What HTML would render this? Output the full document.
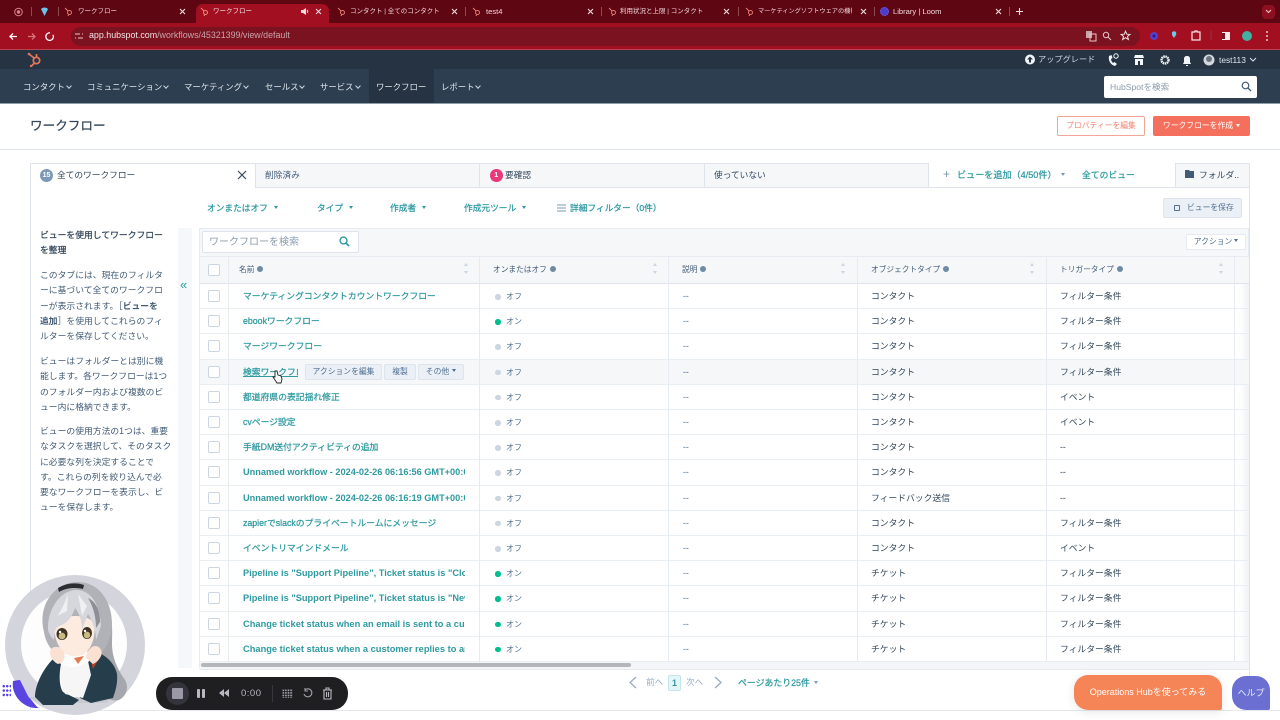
<!DOCTYPE html>
<html lang="ja"><head><meta charset="utf-8"><title>ワークフロー</title>
<style>
*{box-sizing:border-box}
html,body{margin:0;padding:0;width:1280px;height:720px;overflow:hidden;background:#fff}
body{font-family:"Liberation Sans","Noto Sans CJK JP",sans-serif;position:relative;color:#33475b;filter:blur(.3px)}
.a{position:absolute;white-space:nowrap}
.tab{position:absolute;top:5px;line-height:13px;font-size:6.500px;color:#f0d8da;white-space:nowrap}
.x{position:absolute;top:7px}
.hub{position:absolute;top:7px}
.sep{position:absolute;top:7px;width:1px;height:9px;background:#8d4a52}
.nav{position:absolute;top:81px;font-size:8.400px;line-height:13px;color:#dfe6ec;white-space:nowrap}
.car{position:absolute;top:3px;width:4px;height:4px;border-right:1px solid #cbd6e2;border-bottom:1px solid #cbd6e2;transform:rotate(45deg)}
.side{position:absolute;left:40px;font-size:8.800px;line-height:15.300px;color:#425b76;white-space:nowrap}
.m{-webkit-text-stroke:.25px currentColor}
.filter{position:absolute;top:201px;font-size:8.700px;line-height:14px;color:#2f9aa0;white-space:nowrap;-webkit-text-stroke:.25px currentColor}
.tri{display:inline-block;width:0;height:0;border:2.500px solid transparent;border-top:3px solid currentColor;border-bottom:0;margin:0 0 2px 6px;vertical-align:middle;-webkit-text-stroke:0}
.th{position:absolute;top:264px;font-size:7.700px;line-height:12px;color:#425b76;white-space:nowrap}
.i{display:inline-block;width:6px;height:6px;border-radius:50%;background:#6f8aa3;margin-left:3px}
.sort{position:absolute;top:264px;width:5px;height:12px}
.sort:before,.sort:after{content:"";position:absolute;left:0;border:2.500px solid transparent}
.sort:before{top:-1px;border-bottom:3px solid #cbd6e2;border-top:0}
.sort:after{top:7px;border-top:3px solid #cbd6e2;border-bottom:0}
.vl{position:absolute;top:256px;width:1px;height:406px;background:#e5ebf1}
.r{position:absolute;left:199px;width:1050px;height:25.200px;border-bottom:1px solid #e9eef3;font-size:8.800px;line-height:25px;color:#33475b}
.r>*{position:absolute;top:0;white-space:nowrap}
.cb{left:9px;top:6px!important;width:12px;height:12px;border:1px solid #cbd6e2;border-radius:2px;background:#fff}
.n{left:44px;width:222px;overflow:hidden;font-size:8.800px;color:#2f9aa0;-webkit-text-stroke:.25px currentColor}
.l{font-size:9.200px;font-weight:700;-webkit-text-stroke:0}
.s{left:296px;font-size:8px;color:#516f90;padding-left:11px}
.s:before{content:"";position:absolute;left:0;top:10px;width:5.500px;height:5.500px;border-radius:50%;background:#cbd6e2}
.on:before{background:#00bd8f}
.d{left:484px;color:#516f90}
.o{left:672px}
.t{left:861px}
.btn{background:#eaf0f6;border:1px solid #dfe3eb;border-radius:2px;font-size:7.800px;color:#506e91;height:16px;line-height:14px;text-align:center;top:4px!important}
</style></head><body>

<!-- browser chrome -->
<div class="a" style="left:0;top:0;width:1280px;height:23px;background:#5f0613"></div>
<div class="a" style="left:0;top:23px;width:1280px;height:27px;background:#a10f21"></div>
<div class="a" style="left:0;top:49px;width:1280px;height:1px;background:#b8444f"></div>
<div class="a" style="left:196px;top:4px;width:133px;height:19px;background:#a10f21;border-radius:7px 7px 0 0"></div>
<div class="a" style="left:71px;top:27px;width:1069px;height:19px;background:#7a1220;border-radius:10px"></div>

<svg class="a" style="left:13px;top:7px" width="11" height="10" viewBox="0 0 11 10"><circle cx="5.500" cy="5" r="3.800" fill="none" stroke="#d9828c"/><circle cx="5.500" cy="5" r="1.700" fill="#d9828c"/></svg>
<div class="sep" style="left:31px"></div>
<svg class="a" style="left:40px;top:7px" width="9" height="10" viewBox="0 0 9 10"><path d="M1 2c2-2 5-2 7 0L4.500 9z" fill="#6cc4ea"/></svg>
<div class="sep" style="left:58px"></div>

<svg class="hub" style="left:64px" width="9" height="10" viewBox="0 0 9 10"><path d="M1 1l3 3M4 9l1-2" stroke="#e27a70" fill="none"/><circle cx="5.500" cy="5.500" r="2" fill="none" stroke="#e27a70"/></svg>
<div class="tab" style="left:78px">ワークフロー</div>
<svg class="x" style="left:179px" width="7" height="9" viewBox="0 0 7 9"><path d="M1 2l5 5M6 2l-5 5" stroke="#f0dcdd" stroke-width="1.100"/></svg>
<svg class="hub" style="left:200px" width="9" height="10" viewBox="0 0 9 10"><path d="M1 1l3 3M4 9l1-2" stroke="#f08a78" fill="none"/><circle cx="5.500" cy="5.500" r="2" fill="none" stroke="#f08a78"/></svg>
<div class="tab" style="left:213px;color:#f6e6e8">ワークフロー</div>
<svg class="x" style="left:301px" width="8" height="9" viewBox="0 0 8 9"><path d="M0 3h2l3-2v7L2 6H0z" fill="#f0dcdd"/><path d="M6 3c1 1 1 2 0 3" stroke="#f0dcdd" fill="none"/></svg>
<svg class="x" style="left:315px" width="7" height="9" viewBox="0 0 7 9"><path d="M1 2l5 5M6 2l-5 5" stroke="#f0dcdd" stroke-width="1.100"/></svg>
<svg class="hub" style="left:337px" width="9" height="10" viewBox="0 0 9 10"><path d="M1 1l3 3M4 9l1-2" stroke="#e27a70" fill="none"/><circle cx="5.500" cy="5.500" r="2" fill="none" stroke="#e27a70"/></svg>
<div class="tab" style="left:350px">コンタクト | 全てのコンタクト</div>
<svg class="x" style="left:451px" width="7" height="9" viewBox="0 0 7 9"><path d="M1 2l5 5M6 2l-5 5" stroke="#f0dcdd" stroke-width="1.100"/></svg>
<div class="sep" style="left:465px"></div>
<svg class="hub" style="left:472px" width="9" height="10" viewBox="0 0 9 10"><path d="M1 1l3 3M4 9l1-2" stroke="#e27a70" fill="none"/><circle cx="5.500" cy="5.500" r="2" fill="none" stroke="#e27a70"/></svg>
<div class="tab" style="left:486px;font-size:7.600px">test4</div>
<svg class="x" style="left:587px" width="7" height="9" viewBox="0 0 7 9"><path d="M1 2l5 5M6 2l-5 5" stroke="#f0dcdd" stroke-width="1.100"/></svg>
<div class="sep" style="left:601px"></div>
<svg class="hub" style="left:608px" width="9" height="10" viewBox="0 0 9 10"><path d="M1 1l3 3M4 9l1-2" stroke="#e27a70" fill="none"/><circle cx="5.500" cy="5.500" r="2" fill="none" stroke="#e27a70"/></svg>
<div class="tab" style="left:620px">利用状況と上限 | コンタクト</div>
<svg class="x" style="left:723px" width="7" height="9" viewBox="0 0 7 9"><path d="M1 2l5 5M6 2l-5 5" stroke="#f0dcdd" stroke-width="1.100"/></svg>
<div class="sep" style="left:738px"></div>
<svg class="hub" style="left:745px" width="9" height="10" viewBox="0 0 9 10"><path d="M1 1l3 3M4 9l1-2" stroke="#e27a70" fill="none"/><circle cx="5.500" cy="5.500" r="2" fill="none" stroke="#e27a70"/></svg>
<div class="tab" style="left:758px;width:94px;overflow:hidden;font-size:6.200px">マーケティングソフトウェアの機能</div>
<svg class="x" style="left:860px" width="7" height="9" viewBox="0 0 7 9"><path d="M1 2l5 5M6 2l-5 5" stroke="#f0dcdd" stroke-width="1.100"/></svg>
<div class="sep" style="left:874px"></div>
<div class="a" style="left:880px;top:7px;width:9px;height:9px;border-radius:50%;border:1.500px dotted #7a5fe0;background:#4b3cc9"></div>
<div class="tab" style="left:893px;font-size:7.600px">Library | Loom</div>
<svg class="x" style="left:995px" width="7" height="9" viewBox="0 0 7 9"><path d="M1 2l5 5M6 2l-5 5" stroke="#f0dcdd" stroke-width="1.100"/></svg>
<div class="sep" style="left:1009px"></div>
<svg class="a" style="left:1015px;top:7px" width="9" height="9" viewBox="0 0 9 9"><path d="M4.500 1v7M1 4.500h7" stroke="#f5dfe1" stroke-width="1.100"/></svg>
<div class="a" style="left:1262px;top:5px;width:13px;height:14px;border-radius:4px;background:#8e0f20"></div>
<svg class="a" style="left:1265px;top:9px" width="7" height="5" viewBox="0 0 7 5"><path d="M1 1l2.500 2.500L6 1" fill="none" stroke="#f3c9cd"/></svg>

<svg class="a" style="left:6px;top:29px" width="50" height="15" viewBox="0 0 50 15"><g fill="none" stroke-width="1.300"><path d="M4 7.500h7M7 4.500 4 7.500l3 3" stroke="#fff"/><path d="M22 7.500h7M26 4.500l3 3-3 3" stroke="#d9737e"/><path d="M44 3.800a3.800 3.800 0 1 0 3 2" stroke="#fff"/></g></svg>
<svg class="a" style="left:75px;top:32px" width="8" height="9" viewBox="0 0 8 9"><path d="M0 2h5M7 2h1M0 6h1M3 6h5" stroke="#f0c6ca"/></svg>
<div class="a" style="left:89px;top:29px;font-size:8.900px;line-height:13px;color:#c9a4a9"><span style="color:#f3e2e3">app.hubspot.com</span>/workflows/45321399/view/default</div>

<svg class="a" style="left:1083px;top:28px" width="198" height="16" viewBox="0 0 198 16"><g fill="none" stroke="#e8c6ca" stroke-width="1"><rect x="3" y="3" width="6" height="7" fill="#c9a4a9" stroke="none"/><rect x="7" y="6" width="6" height="7"/><circle cx="23" cy="7" r="2.700"/><path d="M25 9l3 3"/><path d="M42.500 3.200l1.300 3 3.200.2-2.500 2 .9 3.100-2.900-1.800-2.800 1.800.8-3.100-2.400-2 3.200-.2z" stroke="#f5e3e5"/></g><circle cx="71" cy="8" r="4" fill="#5a3fc4"/><circle cx="71" cy="8" r="1.500" fill="#2c1b8c"/><path d="M89 4c3-2 5 0 4 3l-2 3-2-3z" fill="#72c8ec"/><path d="M109 4h3v-1h2v1h3v8h-8z" fill="none" stroke="#f5e3e5" stroke-width="1.200"/><path d="M128 3v9" stroke="#8a3b44"/><rect x="139" y="4" width="8" height="8" fill="#f8eaec"/><rect x="139" y="5" width="3" height="6" fill="#7a1220"/><circle cx="164" cy="8" r="5" fill="#3fb2a4"/><circle cx="184" cy="4" r=".9" fill="#fff"/><circle cx="184" cy="8" r=".9" fill="#fff"/><circle cx="184" cy="12" r=".9" fill="#fff"/></svg>

<!-- hubspot top -->
<div class="a" style="left:0;top:50px;width:1280px;height:19px;background:#253342"></div>
<div class="a" style="left:0;top:69px;width:1280px;height:34px;background:#2d3e50"></div>
<div class="a" style="left:0;top:103px;width:1280px;height:1px;background:#8d9ea8"></div>
<svg class="a" style="left:26px;top:51px" width="18" height="17" viewBox="0 0 18 17"><g fill="none" stroke="#e6765b" stroke-width="1.700"><circle cx="10.500" cy="9.500" r="3.200"/><path d="M3 3l5 4"/><path d="M10.500 3v3"/><path d="M8 12.500l-2.500 2.500"/></g><circle cx="3" cy="3" r="1.300" fill="#e6765b"/><circle cx="5" cy="15" r="1.200" fill="#e6765b"/></svg>
<div class="a" style="left:369px;top:69px;width:65px;height:34px;background:#253342"></div>
<div class="nav" style="left:23px">コンタクト<i class="car" style="left:44px"></i></div>
<div class="nav" style="left:87px">コミュニケーション<i class="car" style="left:77px"></i></div>
<div class="nav" style="left:184px">マーケティング<i class="car" style="left:60px"></i></div>
<div class="nav" style="left:265px">セールス<i class="car" style="left:35px"></i></div>
<div class="nav" style="left:320px">サービス<i class="car" style="left:36px"></i></div>
<div class="nav" style="left:376px">ワークフロー</div>
<div class="nav" style="left:441px">レポート<i class="car" style="left:35px"></i></div>

<svg class="a" style="left:1024px;top:53px" width="12" height="13" viewBox="0 0 12 13"><circle cx="6" cy="6.500" r="5" fill="#f0f4f8"/><path d="M6 3.500l-3 3h2v3h2v-3h2z" fill="#253342"/></svg>
<div class="a" style="left:1038px;top:53px;font-size:8.200px;line-height:14px;color:#cbd6e2">アップグレード</div>
<svg class="a" style="left:1021px;top:50px" width="240" height="19" viewBox="0 0 240 19"><path d="M88 6c-1 5 2 9 6 10l2-2-2.500-2-1.500 1c-1-1-2-2.500-2-4l1.500-1-1-3z" fill="#f3f6f9"/><circle cx="95" cy="6" r="2.200" fill="none" stroke="#f3f6f9"/><path d="M114 5h8l1 3h-10zM114 9v6h8V9" fill="#f3f6f9"/><path d="M117 11h2v4h-2z" fill="#253342"/><circle cx="144" cy="10" r="3.500" fill="none" stroke="#f3f6f9" stroke-width="2.400" stroke-dasharray="1.500 .6"/><path d="M162 14h8l-1-2V9c0-2-1-3-3-3s-3 1-3 3v3zM165 15h2v1h-2z" fill="#f3f6f9"/><circle cx="188" cy="10" r="5.500" fill="#d5d8dc"/><circle cx="188" cy="9" r="3" fill="#6c7683"/></svg>
<div class="a" style="left:1219px;top:53px;font-size:8.400px;line-height:14px;color:#dfe6ec">test113</div>
<svg class="a" style="left:1249px;top:57px" width="8" height="5" viewBox="0 0 8 5"><path d="M1 1l3 3 3-3" fill="none" stroke="#dfe6ec"/></svg>

<div class="a" style="left:1104px;top:76px;width:153px;height:22px;background:#fff;border-radius:2px"></div>
<div class="a" style="left:1110px;top:80px;font-size:8.600px;line-height:14px;color:#8a9bae">HubSpotを検索</div>
<svg class="a" style="left:1241px;top:81px" width="11" height="11" viewBox="0 0 11 11"><circle cx="4.500" cy="4.500" r="3.300" fill="none" stroke="#425b76" stroke-width="1.200"/><path d="M7 7l3 3" stroke="#425b76" stroke-width="1.300"/></svg>

<!-- page header -->
<div class="a m" style="left:30px;top:116px;font-size:12.600px;line-height:20px;color:#33475b">ワークフロー</div>
<div class="a" style="left:1057px;top:116px;width:88px;height:20px;border:1px solid #f2a598;border-radius:2px;background:#fff;color:#f2836f;font-size:7.800px;line-height:18px;text-align:center">プロパティーを編集</div>
<div class="a" style="left:1153px;top:116px;width:97px;height:20px;border-radius:2px;background:#f5705c;color:#fff;font-size:7.800px;line-height:20px;text-align:center">ワークフローを作成<span class="tri" style="margin-left:3px;margin-bottom:1px"></span></div>
<div class="a" style="left:0;top:149px;width:1280px;height:1px;background:#dfe3eb"></div>

<!-- tabs -->
<div class="a" style="left:30px;top:163px;width:1px;height:547px;background:#dfe3eb"></div>
<div class="a" style="left:30px;top:163px;width:225px;height:1px;background:#dfe3eb"></div>
<div class="a" style="left:255px;top:163px;width:674px;height:25px;background:#f5f7f9;border:1px solid #dfe3eb"></div>
<div class="a" style="left:479px;top:163px;width:1px;height:25px;background:#dfe3eb"></div>
<div class="a" style="left:704px;top:163px;width:1px;height:25px;background:#dfe3eb"></div>
<div class="a" style="left:929px;top:187px;width:246px;height:1px;background:#dfe3eb"></div>
<div class="a" style="left:1175px;top:163px;width:75px;height:25px;background:#f5f7f9;border:1px solid #dfe3eb"></div>
<div class="a" style="left:1249px;top:187px;width:1px;height:523px;background:#dfe3eb"></div>

<div class="a" style="left:40px;top:169px;width:13px;height:13px;border-radius:50%;background:#7c98b6;color:#fff;font-size:7px;font-weight:700;line-height:13px;text-align:center">15</div>
<div class="a" style="left:57px;top:168px;font-size:8.700px;line-height:14px;color:#33475b">全てのワークフロー</div>
<svg class="a" style="left:237px;top:170px" width="10" height="10" viewBox="0 0 10 10"><path d="M1 1l8 8M9 1l-8 8" stroke="#33475b" stroke-width="1.200"/></svg>
<div class="a" style="left:265px;top:168px;font-size:8.700px;line-height:14px;color:#425b76">削除済み</div>
<div class="a" style="left:490px;top:169px;width:12.500px;height:13px;border-radius:50%;background:#e8397a;color:#fff;font-size:7px;font-weight:700;line-height:13px;text-align:center">1</div>
<div class="a" style="left:505px;top:168px;font-size:8.700px;line-height:14px;color:#33475b">要確認</div>
<div class="a" style="left:714px;top:168px;font-size:8.700px;line-height:14px;color:#33475b">使っていない</div>
<div class="a" style="left:943px;top:167px;font-size:12px;line-height:15px;color:#7c98b6">+</div>
<div class="a m" style="left:957px;top:168px;font-size:9.100px;line-height:14px;color:#2f9aa0">ビューを追加（4/50件）</div>
<span class="a tri" style="left:1061px;top:173px;margin:0;color:#7c98b6"></span>
<div class="a m" style="left:1082px;top:168px;font-size:8.800px;line-height:14px;color:#2f9aa0">全てのビュー</div>
<svg class="a" style="left:1185px;top:169px" width="10" height="10" viewBox="0 0 10 10"><path d="M0 1h4l1 1h4v7H0z" fill="#425b76"/></svg>
<div class="a" style="left:1199px;top:168px;font-size:8.800px;line-height:14px;color:#33475b">フォルダ..</div>

<!-- filters -->
<div class="filter" style="left:207px">オンまたはオフ<span class="tri"></span></div>
<div class="filter" style="left:317px">タイプ<span class="tri"></span></div>
<div class="filter" style="left:390px">作成者<span class="tri"></span></div>
<div class="filter" style="left:464px">作成元ツール<span class="tri"></span></div>
<svg class="a" style="left:557px;top:203px" width="9" height="10" viewBox="0 0 9 10"><path d="M0 2h9M0 5h9M0 8h9" stroke="#7c98b6"/></svg>
<div class="filter" style="left:570px">詳細フィルター（0件）</div>
<div class="a" style="left:1163px;top:198px;width:79px;height:20px;background:#eaf0f6;border:1px solid #dfe3eb;border-radius:2px;color:#506e91;font-size:7.800px;line-height:18px;padding-left:23px">ビューを保存</div>
<div class="a" style="left:1174px;top:205px;width:6px;height:6px;border:1px solid #506e91;border-radius:1px"></div>

<!-- sidebar -->
<div class="side m" style="top:228px;color:#33475b">ビューを使用してワークフロー<br>を整理</div>
<div class="side" style="top:268px">このタブには、現在のフィルタ<br>ーに基づいて全てのワークフロ<br>ーが表示されます。［<b>ビューを</b><br><b>追加</b>］を使用してこれらのフィ<br>ルターを保存してください。</div>
<div class="side" style="top:354px">ビューはフォルダーとは別に機<br>能します。各ワークフローは1つ<br>のフォルダー内および複数のビ<br>ュー内に格納できます。</div>
<div class="side" style="top:424px">ビューの使用方法の1つは、重要<br>なタスクを選択して、そのタスク<br>に必要な列を決定することで<br>す。これらの列を絞り込んで必<br>要なワークフローを表示し、ビ<br>ューを保存します。</div>
<div class="a" style="left:178px;top:228px;width:14px;height:440px;background:#f5f8fa"></div>
<div class="a" style="left:180px;top:277px;font-size:13px;line-height:15px;color:#2f9aa0">«</div>

<!-- table -->
<div class="a" style="left:199px;top:228px;width:1050px;height:28px;background:#f5f7f9;border:1px solid #e5ebf1;border-bottom:0"></div>
<div class="a" style="left:202px;top:231px;width:157px;height:22px;background:#fff;border:1px solid #dfe3eb;border-radius:2px"></div>
<div class="a" style="left:209px;top:235px;font-size:10px;line-height:16px;color:#8a9bae">ワークフローを検索</div>
<svg class="a" style="left:339px;top:236px" width="11" height="11" viewBox="0 0 11 11"><circle cx="4.500" cy="4.500" r="3.400" fill="none" stroke="#2f9aa0" stroke-width="1.400"/><path d="M7 7l3 3" stroke="#2f9aa0" stroke-width="1.600"/></svg>
<div class="a" style="left:1186px;top:234px;width:60px;height:16px;background:#fff;border:1px solid #e5ebf1;border-radius:2px;color:#506e91;font-size:7.800px;line-height:14px;text-align:center">アクション<span class="tri" style="margin-left:2px"></span></div>
<div class="a" style="left:199px;top:256px;width:1050px;height:28px;background:#f5f7f9;border-top:1px solid #e5ebf1;border-bottom:1px solid #dfe3eb"></div>
<div class="a" style="left:1240px;top:284px;width:9px;height:378px;background:linear-gradient(90deg,#fff,#eef1f5)"></div>

<div class="r" style="top:284px"><i class="cb"></i><a class="n">マーケティングコンタクトカウントワークフロー</a><span class="s">オフ</span><span class="d">--</span><span class="o">コンタクト</span><span class="t">フィルター条件</span></div>
<div class="r" style="top:309.200px"><i class="cb"></i><a class="n">ebookワークフロー</a><span class="s on">オン</span><span class="d">--</span><span class="o">コンタクト</span><span class="t">フィルター条件</span></div>
<div class="r" style="top:334.400px"><i class="cb"></i><a class="n">マージワークフロー</a><span class="s">オフ</span><span class="d">--</span><span class="o">コンタクト</span><span class="t">フィルター条件</span></div>
<div class="r" style="top:359.600px;background:#f5f7f9"><i class="cb"></i><a class="n" style="width:55px;text-decoration:underline">検索ワークフロー</a><span class="btn" style="left:106px;width:77px">アクションを編集</span><span class="btn" style="left:185px;width:32px">複製</span><span class="btn" style="left:219px;width:46px">その他<span class="tri" style="margin-left:3px"></span></span><span class="s">オフ</span><span class="d">--</span><span class="o">コンタクト</span><span class="t">フィルター条件</span></div>
<div class="r" style="top:384.800px"><i class="cb"></i><a class="n">都道府県の表記揺れ修正</a><span class="s">オフ</span><span class="d">--</span><span class="o">コンタクト</span><span class="t">イベント</span></div>
<div class="r" style="top:410px"><i class="cb"></i><a class="n">cvページ設定</a><span class="s">オフ</span><span class="d">--</span><span class="o">コンタクト</span><span class="t">イベント</span></div>
<div class="r" style="top:435.200px"><i class="cb"></i><a class="n">手紙DM送付アクティビティの追加</a><span class="s">オフ</span><span class="d">--</span><span class="o">コンタクト</span><span class="t">--</span></div>
<div class="r" style="top:460.400px"><i class="cb"></i><a class="n l">Unnamed workflow - 2024-02-26 06:16:56 GMT+00:00</a><span class="s">オフ</span><span class="d">--</span><span class="o">コンタクト</span><span class="t">--</span></div>
<div class="r" style="top:485.600px"><i class="cb"></i><a class="n l">Unnamed workflow - 2024-02-26 06:16:19 GMT+00:00</a><span class="s">オフ</span><span class="d">--</span><span class="o">フィードバック送信</span><span class="t">--</span></div>
<div class="r" style="top:510.800px"><i class="cb"></i><a class="n">zapierでslackのプライベートルームにメッセージ</a><span class="s">オフ</span><span class="d">--</span><span class="o">コンタクト</span><span class="t">フィルター条件</span></div>
<div class="r" style="top:536px"><i class="cb"></i><a class="n">イベントリマインドメール</a><span class="s">オフ</span><span class="d">--</span><span class="o">コンタクト</span><span class="t">イベント</span></div>
<div class="r" style="top:561.200px"><i class="cb"></i><a class="n l" style="font-size:9.250px">Pipeline is "Support Pipeline", Ticket status is "Closed"</a><span class="s on">オン</span><span class="d">--</span><span class="o">チケット</span><span class="t">フィルター条件</span></div>
<div class="r" style="top:586.400px"><i class="cb"></i><a class="n l" style="font-size:9.250px">Pipeline is "Support Pipeline", Ticket status is "New"</a><span class="s on">オン</span><span class="d">--</span><span class="o">チケット</span><span class="t">フィルター条件</span></div>
<div class="r" style="top:611.600px"><i class="cb"></i><a class="n l" style="font-size:9.300px">Change ticket status when an email is sent to a customer</a><span class="s on">オン</span><span class="d">--</span><span class="o">チケット</span><span class="t">フィルター条件</span></div>
<div class="r" style="top:636.800px"><i class="cb"></i><a class="n l" style="font-size:9.300px">Change ticket status when a customer replies to an email</a><span class="s on">オン</span><span class="d">--</span><span class="o">チケット</span><span class="t">フィルター条件</span></div>

<div class="vl" style="left:199px;top:228px;height:440px"></div>
<div class="vl" style="left:228px"></div><div class="vl" style="left:479px"></div><div class="vl" style="left:668px"></div><div class="vl" style="left:857px"></div><div class="vl" style="left:1046px"></div><div class="vl" style="left:1234px"></div>

<i class="a" style="left:208px;top:264px;width:12px;height:12px;border:1px solid #cbd6e2;border-radius:2px;background:#fff"></i>
<div class="th" style="left:239px">名前<i class="i"></i></div><span class="sort" style="left:464px"></span>
<div class="th" style="left:493px">オンまたはオフ<i class="i"></i></div><span class="sort" style="left:653px"></span>
<div class="th" style="left:682px">説明<i class="i"></i></div><span class="sort" style="left:841px"></span>
<div class="th" style="left:871px">オブジェクトタイプ<i class="i"></i></div><span class="sort" style="left:1030px"></span>
<div class="th" style="left:1060px">トリガータイプ<i class="i"></i></div><span class="sort" style="left:1219px"></span>

<!-- scrollbar -->
<div class="a" style="left:200px;top:662px;width:1049px;height:7px;background:#f4f5f7"></div>
<div class="a" style="left:201px;top:663px;width:430px;height:4px;border-radius:2px;background:#b4b6b9"></div>
<div class="a" style="left:199px;top:669px;width:1050px;height:1px;background:#e5ebf1"></div>

<!-- pager -->
<svg class="a" style="left:628px;top:676px" width="10" height="13" viewBox="0 0 10 13"><path d="M8 1L2 6.500l6 5.500" fill="none" stroke="#99acc2" stroke-width="1.300"/></svg>
<div class="a" style="left:646px;top:675px;font-size:8.600px;line-height:14px;color:#99acc2">前へ</div>
<div class="a" style="left:668px;top:675px;width:13px;height:16px;background:#e5f5f8;border:1px solid #c4e6ea;border-radius:2px;color:#2f9aa0;font-size:9px;font-weight:700;line-height:14px;text-align:center">1</div>
<div class="a" style="left:686px;top:675px;font-size:8.600px;line-height:14px;color:#99acc2">次へ</div>
<svg class="a" style="left:713px;top:676px" width="10" height="13" viewBox="0 0 10 13"><path d="M2 1l6 5.500L2 12" fill="none" stroke="#99acc2" stroke-width="1.300"/></svg>
<div class="a m" style="left:738px;top:676px;font-size:8.900px;line-height:14px;color:#2f9aa0">ページあたり25件<span class="tri" style="color:#7c98b6;margin-left:4px"></span></div>
<div class="a" style="left:0;top:710px;width:1280px;height:1px;background:#e5e8ec"></div>

<!-- floating buttons -->
<div class="a" style="left:1074px;top:675px;width:148px;height:35px;background:#f58557;border-radius:14px 14px 2px 14px;color:#fff;font-size:9px;line-height:35px;text-align:center;box-shadow:0 2px 10px rgba(0,0,0,.1)">Operations Hubを使ってみる</div>
<div class="a" style="left:1232px;top:676px;width:38px;height:34px;background:#6a6fd1;border-radius:14px 14px 2px 14px;color:#e8e9fa;font-size:9px;line-height:34px;text-align:center">ヘルプ</div>

<!-- loom avatar -->
<svg class="a" style="left:0;top:570px" width="150" height="150" viewBox="0 0 150 150">
<circle cx="75" cy="75" r="70" fill="#d4d5dc"/>
<circle cx="74" cy="74" r="53" fill="#fdfdfe"/>
<path d="M13 111c-2 14 9 26 26 27-10-6-18-14-20-28z" fill="#5b45e0"/>
<path d="M13 112a24 24 0 0 0 25 26l-10-12-8-16z" fill="#5b45e0"/>
<path d="M28 127h84l-6 6H40z" fill="#c9cad0"/>
<path d="M104 30c10 14 8 30 8 44 0 14 6 26 13 36 4 7 2 16-6 20-8 2-14-2-16-10-4-20-10-50-6-80z" fill="#a6a7ad"/>
<path d="M44 62C37 36 54 12 78 12c20 0 34 18 34 42 0 10-3 20-10 28l-50-2c-4-5-7-11-8-18z" fill="#b0b2b8"/>
<path d="M58 18c8-5 18-6 26-3l-1 4c-9-2-17-1-24 3z" fill="#2c2c33"/>
<path d="M54 56c2-12 36-14 40-2 2 12-2 24-10 30-6 3-14 3-20-1-6-6-10-16-10-27z" fill="#fdebe0"/>
<path d="M48 60c-1-20 12-40 28-40 15 0 24 14 25 36l-5 14c0-8-3-18-8-26l-6 16c0-8-2-16-7-22-3 10-9 16-16 18-4 2-5 8-5 14-3-3-5-6-6-10z" fill="#d6d7dc"/>
<path d="M68 24c-3 8-6 16-11 22l10-5zM78 24l4 22 5-10z" fill="#f0f0f3"/>
<path d="M88 28c6 10 8 20 8 30l4-6c0-12-4-20-12-24z" fill="#8e8f96"/>
<ellipse cx="62" cy="64" rx="5.500" ry="6" fill="#3d3324"/><ellipse cx="87" cy="63" rx="5" ry="6" fill="#3d3324"/>
<ellipse cx="62" cy="66" rx="3.400" ry="3.400" fill="#c9ba80"/><ellipse cx="87" cy="65" rx="3.200" ry="3.400" fill="#c9ba80"/>
<circle cx="60" cy="62" r="1.200" fill="#fff"/><circle cx="85" cy="61" r="1.200" fill="#fff"/>
<path d="M35 127c0-12 8-28 18-38l8 5c-2 10-2 22 2 28l16 8-6 5-30 0z" fill="#263d4c"/>
<path d="M80 128c2-10 0-20 3-30l14-16c10 4 18 12 20 22 1 10-2 18-4 24l-22 5z" fill="#263d4c"/>
<path d="M62 94c8 5 18 4 26-3l3 14-8 23-18-4c-4-10-6-20-3-30z" fill="#f6f6f7"/>
<path d="M74 88l10-2-6 8z" fill="#e17c4f"/><path d="M90 88l9-7 2 4-8 14z" fill="#b13f2b"/>
<path d="M51 79c4-4 12-2 13 4 2 5-1 10-6 11-5-2-10-10-7-15z" fill="#fbe1d2"/>
<path d="M86 88c0-6 5-12 9-12 5 0 8 5 6 10-2 4-4 6-8 8z" fill="#fbe1d2"/>
</svg>
<div class="a" style="left:2px;top:684px;width:9px;height:13px;background-image:radial-gradient(circle,#5b45e0 1.200px,transparent 1.400px);background-size:3.500px 4.400px"></div>

<!-- recorder -->
<div class="a" style="left:156px;top:677px;width:192px;height:33px;border-radius:16px;background:#1f1f22"></div>
<div class="a" style="left:166px;top:682px;width:23px;height:23px;border-radius:50%;background:#34343c"></div>
<div class="a" style="left:172px;top:688px;width:11px;height:11px;border-radius:1px;background:#9b99a8"></div>
<div class="a" style="left:197px;top:689px;width:3px;height:9px;background:#b9bac0;border-radius:1px"></div>
<div class="a" style="left:202px;top:689px;width:3px;height:9px;background:#b9bac0;border-radius:1px"></div>
<svg class="a" style="left:218px;top:688px" width="12" height="10" viewBox="0 0 12 10"><path d="M6 1v8L1 5zM11 1v8L6 5z" fill="#b9bac0"/></svg>
<div class="a" style="left:241px;top:687px;font-size:9.500px;line-height:13px;color:#b9bac0;letter-spacing:.5px">0:00</div>
<div class="a" style="left:272px;top:685px;width:1px;height:17px;background:#38383c"></div>
<div class="a" style="left:282px;top:689px;width:11px;height:9px;background-image:radial-gradient(circle,#a0a1a7 .8px,transparent 1px);background-size:2.600px 2.600px"></div>
<svg class="a" style="left:302px;top:687px" width="12" height="13" viewBox="0 0 12 13"><path d="M3 3a4 4 0 1 1-1 4M3 1v3h3" fill="none" stroke="#9fa0a6" stroke-width="1.100"/></svg>
<svg class="a" style="left:322px;top:687px" width="11" height="13" viewBox="0 0 11 13"><path d="M1 3h9M4 3V1h3v2M2 3v9h7V3M4.500 5v5M6.500 5v5" fill="none" stroke="#b9bac0" stroke-width="1.100"/></svg>

<!-- cursor -->
<svg class="a" style="left:272px;top:370px" width="12" height="14" viewBox="0 0 12 14"><path d="M3 1l2 0 1 4 3 1 1 3-1 4H5L1 7l2 0z" fill="#fff" stroke="#222" stroke-width=".9"/></svg>
</body></html>
